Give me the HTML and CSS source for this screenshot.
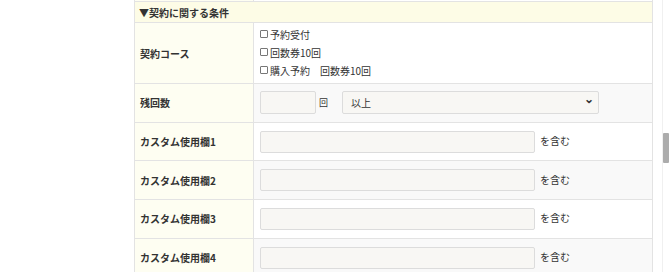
FILE: index.html
```html
<!DOCTYPE html>
<html lang="ja">
<head>
  <meta charset="UTF-8" />
  <title>契約に関する条件</title>
  <link rel="stylesheet" href="styles.css">
</head>
<body>
  <div class="page">
    <table class="search-table">
      <tr class="prev-row">
        <th></th>
        <td></td>
      </tr>
      <tr>
        <th colspan="2" class="section-head">▼契約に関する条件</th>
      </tr>
      <tr class="course-row">
        <th>契約コース</th>
        <td>
          <label class="check"><span class="box"></span>予約受付</label>
          <label class="check"><span class="box"></span>回数券10回</label>
          <label class="check"><span class="box"></span>購入予約　回数券10回</label>
        </td>
      </tr>
      <tr class="alt">
        <th>残回数</th>
        <td>
          <div class="field-line">
            <input type="text" class="input-short">
            <span class="unit">回</span>
            <div class="select-box">以上<span class="chev">&#8964;</span></div>
          </div>
        </td>
      </tr>
      <tr>
        <th>カスタム使用欄1</th>
        <td><div class="field-line"><input type="text" class="input-long"><span class="suffix">を含む</span></div></td>
      </tr>
      <tr class="alt">
        <th>カスタム使用欄2</th>
        <td><div class="field-line"><input type="text" class="input-long"><span class="suffix">を含む</span></div></td>
      </tr>
      <tr>
        <th>カスタム使用欄3</th>
        <td><div class="field-line"><input type="text" class="input-long"><span class="suffix">を含む</span></div></td>
      </tr>
      <tr class="alt">
        <th>カスタム使用欄4</th>
        <td><div class="field-line"><input type="text" class="input-long"><span class="suffix">を含む</span></div></td>
      </tr>
    </table>
  </div>
  <div class="scrollbar"><div class="thumb"></div></div>
</body>
</html>
```

FILE: styles.css
```css
* {
  margin: 0;
  padding: 0;
  box-sizing: border-box;
}

body {
  background: #fff;
  font-family: "Noto Sans CJK JP", "Noto Sans", sans-serif;
  font-size: 10px;
  color: #333;
  overflow: hidden;
  height: 272px;
}

.page {
  padding-left: 134px;
  margin-top: -19px;
}

.search-table {
  width: 519px;
  border-collapse: collapse;
  border: 1px solid #ddd;
}

.search-table th,
.search-table td {
  border: 1px solid #e3e3e3;
  text-align: left;
  vertical-align: middle;
  height: 38.7px;
}

.search-table th {
  width: 119px;
  background: #fefef2;
  font-weight: bold;
  padding-left: 5px;
}

.search-table td {
  background: #fff;
  padding-left: 6px;
}

.search-table tr.alt td {
  background: #f9f9f9;
}

.prev-row th,
.prev-row td {
  height: 20px;
}

.search-table th.section-head {
  height: 21px;
  background: #fdfce6;
  padding-left: 4px;
}

.search-table .course-row th,
.search-table .course-row td {
  height: 61px;
}

.course-row td {
  padding-bottom: 2px;
}

.check {
  display: flex;
  align-items: center;
  height: 18px;
}

.box {
  width: 8px;
  height: 8px;
  border: 1px solid #777;
  border-radius: 1px;
  margin-right: 2px;
  background: #fff;
}

.field-line {
  display: flex;
  align-items: center;
}

input {
  height: 23px;
  border: 1px solid #dcdcdc;
  border-radius: 2px;
  background: #f8f7f4;
  font-family: inherit;
}

.input-short {
  width: 56px;
}

.input-long {
  width: 275px;
  height: 22px;
}

.unit {
  font-size: 9px;
  margin: -1px 0 0 3px;
  width: 23px;
}

.select-box {
  position: relative;
  width: 257px;
  height: 23px;
  border: 1px solid #dcdcdc;
  border-radius: 2px;
  background: #f8f7f4;
  padding-left: 8px;
  line-height: 21px;
}

.chev {
  position: absolute;
  right: 4px;
  top: -5px;
  font-size: 12px;
  font-weight: bold;
}

.suffix {
  margin: -2px 0 0 5px;
}

.scrollbar {
  position: absolute;
  top: 0;
  left: 662px;
  width: 7px;
  height: 272px;
  border-left: 1px solid #f0f0f0;
}

.thumb {
  position: absolute;
  top: 133px;
  left: 0;
  width: 6px;
  height: 30px;
  background: #acacac;
  border-radius: 1px;
}
```
